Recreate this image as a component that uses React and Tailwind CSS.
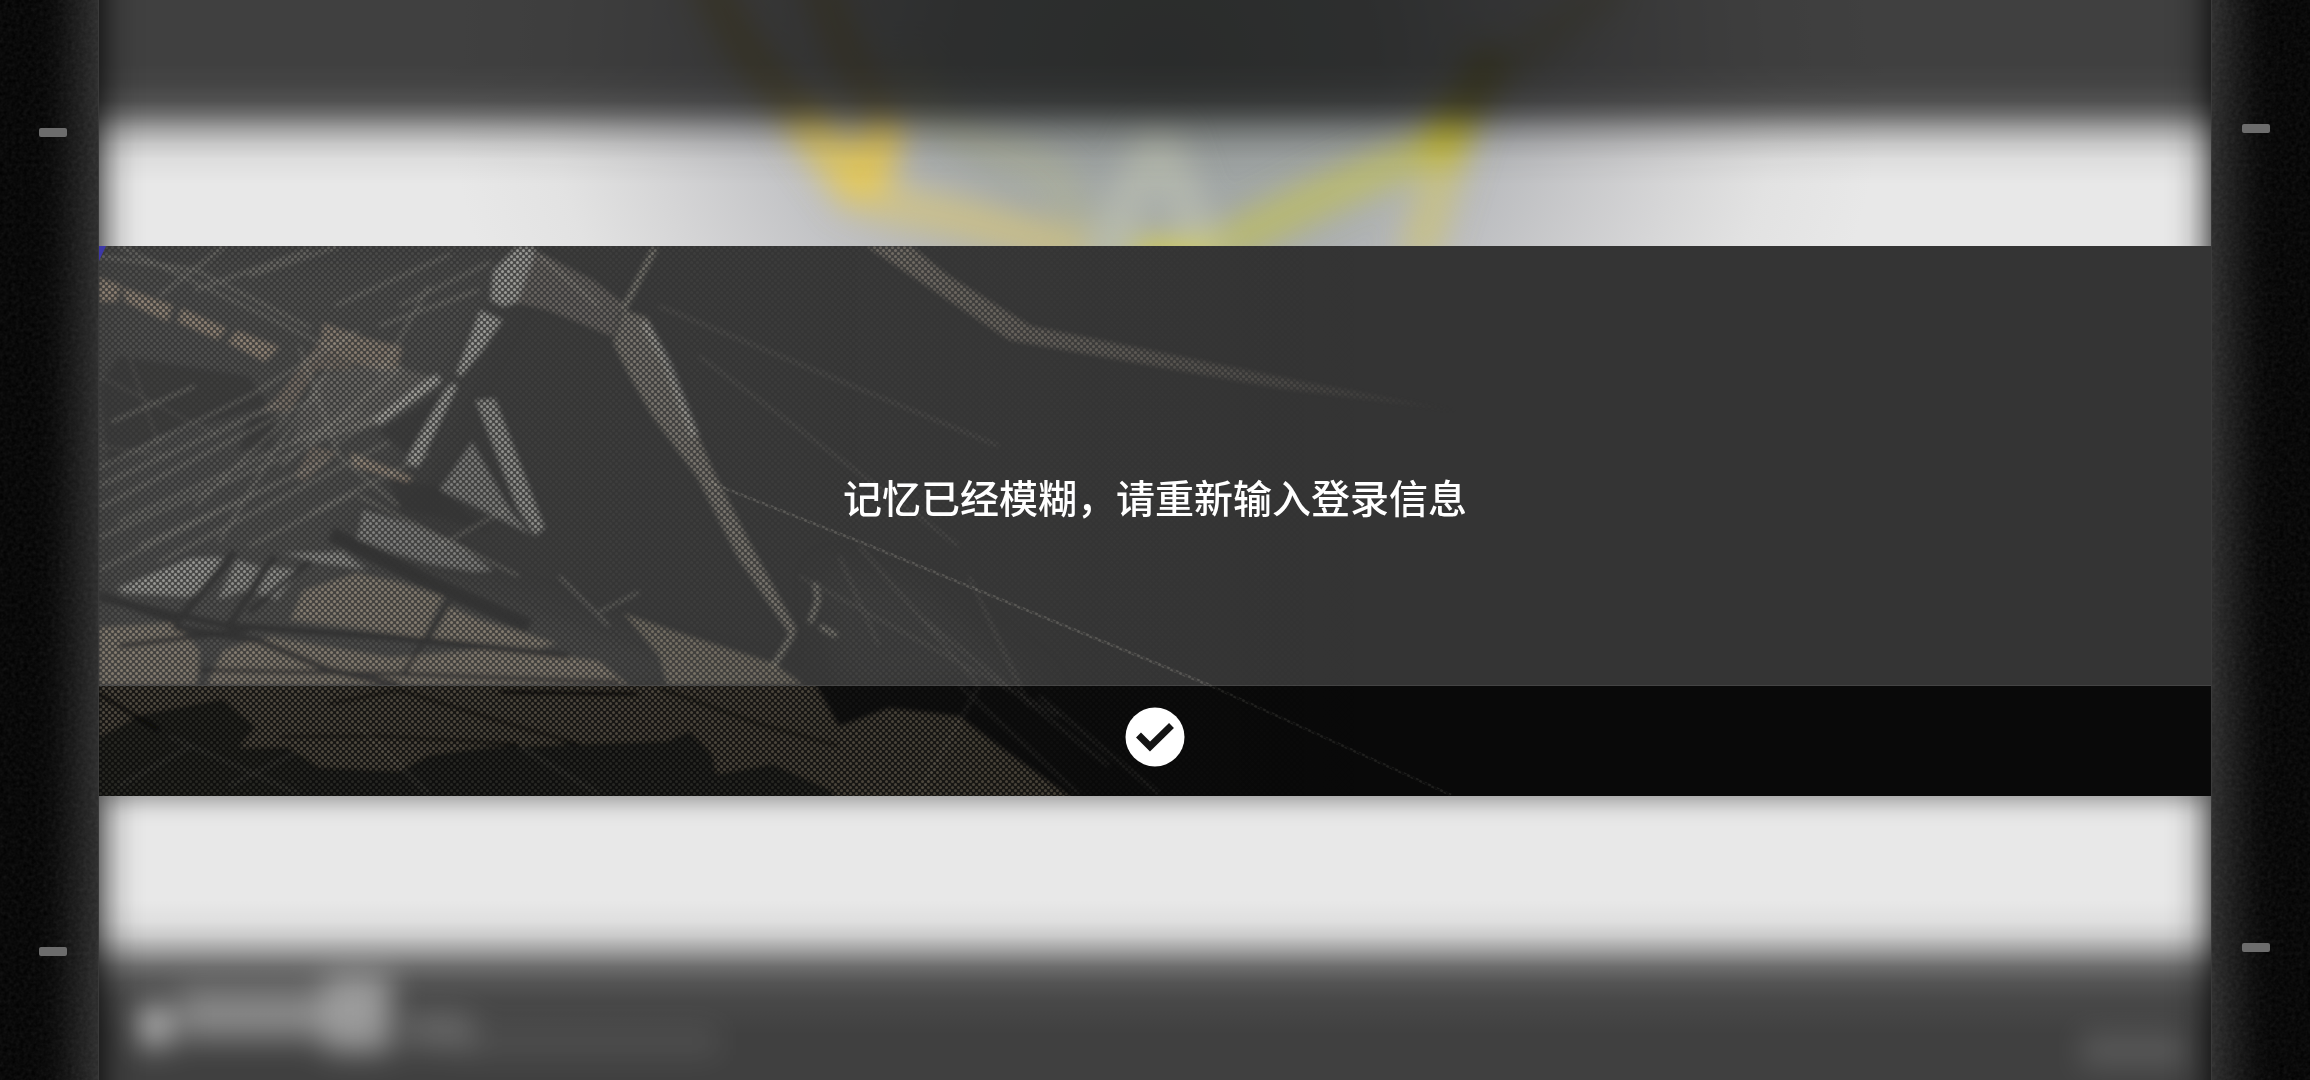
import React, { useState } from 'react';

// Thin scratch lines of the artwork
const scratches = [
  'M0 10 L96 24 L212 82', 'M20 0 L150 62 L228 100', 'M60 50 L126 0', 'M96 44 L210 4', 'M150 30 L240 0',
  'M236 60 L352 8', 'M280 80 L380 44', 'M300 60 L392 16', 'M12 176 L96 140', 'M0 222 L150 150 L260 84',
  'M0 240 L180 158', 'M0 262 L220 150', 'M20 276 L262 166', 'M0 292 L300 160', 'M40 300 L230 214',
  'M0 324 L190 232', 'M60 316 L290 196', 'M150 300 L258 246', 'M120 296 L170 214 L232 120', 'M200 100 L240 210 L300 260',
  'M210 268 L330 208', 'M340 300 L410 262', 'M182 220 L304 120', 'M232 200 L330 142', 'M96 260 L190 170',
  'M440 10 L500 60', 'M460 330 L510 380', 'M500 366 L540 346', 'M260 250 L420 330', 'M330 40 L280 130',
];

const faintScratches = [
  'M560 60 L900 200', 'M600 110 L860 300', 'M760 300 L880 439', 'M700 330 L960 470', 'M820 370 L1010 520',
  'M870 330 L930 460', 'M740 310 L780 400', 'M880 440 L820 548', 'M940 450 L1060 548', 'M860 439 L980 548',
  'M20 540 L92 500', 'M130 540 L200 505', 'M70 490 L200 548', 'M260 480 L330 548', 'M420 500 L500 548',
  'M0 130 L120 190', 'M30 110 L60 200', 'M0 200 L70 210',
];

const darkLines = [
  { d: 'M0 352 L124 379 L300 392 L470 410', w: 7 },
  { d: 'M74 381 L160 395 L230 424 L300 439', w: 7 },
  { d: 'M136 306 L78 376 L0 348', w: 8 },
  { d: 'M176 310 L128 382', w: 7 },
  { d: 'M212 314 L150 366', w: 6 },
  { d: 'M351 355 L304 428', w: 5 },
  { d: 'M232 288 L330 336 L430 380', w: 15 },
  { d: 'M100 424 L300 428 L520 436', w: 5 },
  { d: 'M20 400 L150 384', w: 6 },
];

const darkFooterLines = [
  { d: 'M180 491 L280 490 L420 498', w: 4 },
  { d: 'M230 458 L300 444 L410 478 L480 498', w: 4 },
  { d: 'M0 448 L60 484', w: 6 },
  { d: 'M560 442 L660 478 L740 500', w: 4 },
  { d: 'M400 446 L540 448', w: 6 },
];

const Artwork = () => (
  <svg
    className="pointer-events-none absolute inset-0 h-full w-full"
    viewBox="0 0 2112 550"
    preserveAspectRatio="xMinYMin slice"
    aria-hidden="true"
  >
    <defs>
      <pattern id="dots" width="6" height="6" patternUnits="userSpaceOnUse">
        <rect width="6" height="6" fill="#383838" />
        <circle cx="1.5" cy="1.5" r="1.5" fill="#fff" />
        <circle cx="4.5" cy="4.5" r="1.5" fill="#fff" />
      </pattern>
      <linearGradient id="wash" x1="0" x2="1">
        <stop offset="0" stopColor="#8a8a84" stopOpacity="0.16" />
        <stop offset="0.3" stopColor="#8a8a84" stopOpacity="0.1" />
        <stop offset="0.6" stopColor="#8a8a84" stopOpacity="0" />
      </linearGradient>
      <linearGradient id="beam" gradientUnits="userSpaceOnUse" x1="767" x2="1360" y1="0" y2="0">
        <stop offset="0" stopColor="#9a9184" stopOpacity="0.6" />
        <stop offset="0.4" stopColor="#9a9184" stopOpacity="0.42" />
        <stop offset="1" stopColor="#9a9184" stopOpacity="0.05" />
      </linearGradient>
      <filter id="soften">
        <feGaussianBlur stdDeviation="2" />
      </filter>
      <filter id="mist" x="-10%" y="-10%" width="120%" height="120%">
        <feGaussianBlur stdDeviation="18" />
      </filter>
      <mask id="halftone">
        <rect width="2112" height="550" fill="url(#dots)" />
      </mask>
      <clipPath id="panel">
        <rect width="2112" height="439" />
      </clipPath>
      <clipPath id="base">
        <rect y="440" width="2112" height="110" />
      </clipPath>
    </defs>

    <g mask="url(#halftone)">
      <rect width="2112" height="550" fill="url(#wash)" />

      <g clipPath="url(#panel)">
        <g fill="#8f8f8a" opacity="0.2" filter="url(#mist)">
          <path d="M0 0H430L360 130L310 230L250 300L0 340Z" />
          <path d="M0 300L250 300L560 410L700 439H0Z" />
          <path d="M720 320L820 340L960 450H740Z" opacity="0.5" />
        </g>
        <g filter="url(#soften)">
          <path d="M20 110L150 130L170 160L60 190L10 220L0 140Z M150 170L180 170L170 200L140 205Z M280 185L345 145L310 210Z M290 232L340 240L390 285L300 262Z" fill="#343434" opacity="0.6" />

          {/* warm segments */}
          <g fill="#b09c88" opacity="0.68">
            <path d="M0 31L22 39L18 56L0 56Z" />
            <path d="M24 41L74 59L69 76L26 56Z" />
            <path d="M83 62L128 82L119 94L78 76Z" />
            <path d="M138 84L181 101L166 116L128 97Z" />
            <path d="M224 76L264 91L304 101L298 124L281 124L251 117L221 97Z" opacity="0.85" />
            <path d="M221 94L178 151L164 164L191 166L218 124L258 124Z" opacity="0.6" />
            <path d="M251 206L314 231L309 236L254 221Z" />
            <path d="M212 200L240 206L205 236L196 230Z" opacity="0.6" />
          </g>
          <path d="M281 116L338 132L281 179L190 200L218 130Z" fill="#a09a92" opacity="0.35" />
          <path d="M436 4L494 34L524 57L514 91L481 77L448 64L418 57Z" fill="#9d958c" opacity="0.45" />

          {/* bright steel */}
          <g fill="#b8b8b3" opacity="0.75">
            <path d="M338 127L343 136L281 179L274 174L318 140Z" />
            <path d="M356 136L358 142L319 222L306 216L348 141Z" />
            <path d="M418 1L436 1L434 14L418 57L404 61L391 54L394 24Z" />
            <path d="M381 64L404 74L384 104L362 131L357 127Z" />
            <path d="M376 154L396 152L446 282L436 290L418 262Z" opacity="0.9" />
            <path d="M373 195L410 262L432 289L341 243Z" opacity="0.7" />
            <path d="M264 264L311 277L365 302L395 325L375 326L330 318L290 305L258 292Z" opacity="0.7" />
            <path d="M18 342L91 312L124 311L104 344L88 351L24 347Z" opacity="0.9" />
            <path d="M138 314L161 321L148 344L118 354Z" opacity="0.8" />
            <path d="M171 321L201 324L178 354L158 347Z" opacity="0.8" />
            <path d="M184 307L244 306L268 324L221 317Z" opacity="0.8" />
          </g>
          <path d="M514 97L524 64L548 71L568 117L588 164L614 224L651 297L698 384L691 389L639 312L598 231L554 171L531 131Z" fill="#aca497" opacity="0.55" />
          <path d="M545 76L568 117L596 190" fill="none" stroke="#c4c4bf" strokeWidth="9" opacity="0.45" />
          <path d="M556 2L524 64 M694 387L674 421 M716 337L719 354L711 377 M721 380L738 390" fill="none" stroke="#aaa69a" strokeWidth="6" opacity="0.6" />

          {/* ground */}
          <g fill="#a89c88" opacity="0.6">
            <path d="M204 344L258 327L300 336L344 351L324 391L274 384L191 374Z" />
            <path d="M351 361L381 374L458 397L440 402L381 396L334 391Z" />
            <path d="M0 381L74 377L101 404L98 439H0Z" />
            <path d="M171 391L291 411L411 402L500 415L530 439H108L124 404Z" />
            <path d="M524 367L581 387L674 417L705 439H568L560 410Z" opacity="0.85" />
          </g>
          {darkLines.map((line) => (
            <path key={line.d} d={line.d} fill="none" stroke="#303030" strokeWidth={line.w} opacity="0.85" />
          ))}
          <path d="M767 0L812 0L850 30L932 80L1200 135L1360 165L1180 142L910 94Z" fill="url(#beam)" />
        </g>
      </g>

      {/* lower strip, same ground in shadow */}
      <g clipPath="url(#base)">
        <g filter="url(#soften)">
          <path d="M0 430H712L740 480L790 462L860 470L900 500L985 560H0Z" fill="#968a72" opacity="0.42" />
          <path d="M44 467L124 452L158 481L141 501L190 500L220 520L300 524L330 508L381 501L481 497L568 494L591 484L614 507L618 527L674 517L734 544L740 560H0V490Z" fill="#1e1e1d" opacity="0.8" />
          {darkFooterLines.map((line) => (
            <path key={line.d} d={line.d} fill="none" stroke="#0a0a0a" strokeWidth={line.w} opacity="0.9" />
          ))}
        </g>
      </g>

      <g fill="none" stroke="#a8a69c" strokeWidth="3" filter="url(#soften)">
        <g opacity="0.5">
          {scratches.map((d) => (
            <path key={d} d={d} />
          ))}
        </g>
        <g opacity="0.2">
          {faintScratches.map((d) => (
            <path key={d} d={d} />
          ))}
        </g>
      </g>
      <path d="M610 236L774 301L1110 439" fill="none" stroke="#a8a69c" strokeWidth="3" opacity="0.3" />
      <path d="M1110 439L1352 549" fill="none" stroke="#a8a69c" strokeWidth="3" opacity="0.15" />
    </g>
    <path d="M0 0H7L0 15Z" fill="#3d38a8" />
  </svg>
);

const Backdrop = () => (
  <div className="absolute inset-0 overflow-hidden bg-[#e8e8e8]" aria-hidden="true">
    <svg className="absolute inset-0 h-full w-full" viewBox="0 0 2112 1080" preserveAspectRatio="xMidYMid slice">
      <defs>
        <radialGradient id="halo">
          <stop offset="0" stopColor="#9aa09e" />
          <stop offset="0.3" stopColor="#a1a6a6" stopOpacity="0.95" />
          <stop offset="0.5" stopColor="#a6a8ac" stopOpacity="0.66" />
          <stop offset="0.7" stopColor="#aaaaae" stopOpacity="0.34" />
          <stop offset="0.86" stopColor="#b0b0b0" stopOpacity="0.1" />
          <stop offset="1" stopColor="#b0b0b0" stopOpacity="0" />
        </radialGradient>
        <filter id="haze" x="-20%" y="-20%" width="140%" height="140%">
          <feGaussianBlur stdDeviation="16" />
        </filter>
        <filter id="smudge" x="-20%" y="-60%" width="140%" height="220%">
          <feGaussianBlur stdDeviation="15" />
        </filter>
      </defs>
      <ellipse cx="1066" cy="60" rx="720" ry="640" fill="url(#halo)" />
      <g filter="url(#haze)" fill="none" strokeWidth="36">
        <path d="M604 -30L640 40L700 115" stroke="#b8a03c" opacity="0.45" />
        <path d="M700 110L768 200" stroke="#e2ca60" strokeWidth="44" opacity="0.9" />
        <path d="M715 -30L750 60L785 110" stroke="#b39a3c" opacity="0.4" />
        <path d="M788 115L766 195" stroke="#e6c855" strokeWidth="42" opacity="0.9" />
        <path d="M768 200L860 218L990 252" stroke="#dcc870" opacity="0.65" />
        <path d="M800 60L850 130L950 170L1000 250" stroke="#b4b68a" opacity="0.35" />
        <path d="M1520 -20L1392 80L1352 135" stroke="#a39645" opacity="0.25" />
        <path d="M1392 50L1350 140" stroke="#a39a30" opacity="0.5" />
        <path d="M1350 140L1215 200L1110 252" stroke="#c6c44c" opacity="0.65" />
        <path d="M1356 135L1318 260" stroke="#cfc46a" opacity="0.65" />
        <path d="M1360 110L1335 160" stroke="#c8be32" strokeWidth="42" opacity="0.9" />
        <path d="M1060 130L1000 270M1060 130L1110 270" stroke="#c9cfb8" opacity="0.45" />
        <path d="M1030 256H1110" stroke="#d2cc50" opacity="0.9" />
      </g>
    </svg>
    <div className="absolute inset-x-0 top-0 h-[184px] bg-[linear-gradient(to_bottom,rgba(0,0,0,0.725)_35%,rgba(0,0,0,0.7)_46%,rgba(0,0,0,0.65)_55%,rgba(0,0,0,0.52)_62%,rgba(0,0,0,0.31)_70%,rgba(0,0,0,0.14)_78%,rgba(0,0,0,0.04)_87%,transparent)]" />
    <div className="absolute inset-x-0 bottom-0 h-[180px] bg-[linear-gradient(to_top,rgba(0,0,0,0.725)_25%,rgba(0,0,0,0.69)_44%,rgba(0,0,0,0.64)_54%,rgba(0,0,0,0.53)_63%,rgba(0,0,0,0.31)_72%,rgba(0,0,0,0.13)_80%,rgba(0,0,0,0.04)_88%,transparent)]" />
    <svg className="absolute bottom-0 left-0 h-[150px] w-[700px]" viewBox="0 0 700 150">
      <g filter="url(#smudge)" fill="#fff">
        <rect x="40" y="76" width="32" height="40" opacity="0.62" />
        <rect x="80" y="60" width="150" height="50" opacity="0.36" />
        <rect x="226" y="46" width="66" height="76" opacity="0.46" />
        <rect x="306" y="84" width="66" height="34" opacity="0.2" />
        <rect x="360" y="96" width="260" height="30" opacity="0.08" />
      </g>
    </svg>
    <svg className="absolute right-0 bottom-0 h-[80px] w-[240px]" viewBox="0 0 240 80">
      <rect x="110" y="32" width="108" height="36" fill="#fff" opacity="0.12" filter="url(#smudge)" />
    </svg>
    <div className="absolute inset-y-0 left-0 w-12 bg-[linear-gradient(to_right,rgba(0,0,0,0.5),rgba(0,0,0,0.28)_22%,rgba(0,0,0,0.1)_46%,rgba(0,0,0,0.02)_75%,transparent)]" />
    <div className="absolute inset-y-0 right-0 w-12 bg-[linear-gradient(to_left,rgba(0,0,0,0.5),rgba(0,0,0,0.28)_22%,rgba(0,0,0,0.1)_46%,rgba(0,0,0,0.02)_75%,transparent)]" />
  </div>
);

const Grain = () => (
  <svg className="absolute inset-0 h-full w-full opacity-10" aria-hidden="true">
    <filter id="grain">
      <feTurbulence type="fractalNoise" baseFrequency="0.25" numOctaves="2" />
      <feColorMatrix type="saturate" values="0" />
    </filter>
    <rect width="100%" height="100%" filter="url(#grain)" />
  </svg>
);

const App = () => {
  const [open, setOpen] = useState(true);

  return (
    <div className="flex min-h-screen bg-black font-['Noto_Sans_CJK_SC',sans-serif]">
      {/* Left rail */}
      <aside className="relative flex w-[99px] shrink-0 flex-col justify-between border-r border-[#3a3a3a] bg-linear-to-r from-black from-20% to-[#292929] pt-32 pb-31 pl-[39px]">
        <Grain />
        <span className="relative h-[9px] w-7 rounded-xs bg-[#6c6c6c]" />
        <span className="relative h-[9px] w-7 rounded-xs bg-[#6c6c6c]" />
      </aside>

      <main className="relative flex min-w-0 flex-1 flex-col">
        <Backdrop />
        {open && (
          <section
            role="alertdialog"
            aria-labelledby="dialog-message"
            className="relative mt-[246px] flex flex-col shadow-[0_6px_20px_rgba(0,0,0,0.35)] [clip-path:inset(0_0_-30px_0)]"
          >
            <div className="flex min-h-[439px] items-center justify-center bg-[#343434] px-8 pt-15">
              <p id="dialog-message" className="z-10 text-[39px] leading-[56px] font-medium text-white">
                记忆已经模糊，请重新输入登录信息
              </p>
            </div>
            <div className="flex h-[111px] items-start justify-center border-t border-[#444] bg-[#090909] pt-[21px]">
              <button
                type="button"
                aria-label="确认"
                onClick={() => setOpen(false)}
                className="z-10 h-15 w-15 cursor-pointer rounded-full"
              >
                <svg viewBox="0 0 60 60" className="h-full w-full">
                  <circle cx="30" cy="30" r="29.5" fill="#fff" />
                  <path d="M13.5 28L25 39.5L46.5 18.5" fill="none" stroke="#141414" strokeWidth="7" />
                </svg>
              </button>
            </div>
            <Artwork />
          </section>
        )}
      </main>

      {/* Right rail */}
      <aside className="relative flex w-[99px] shrink-0 flex-col justify-between border-l border-[#3a3a3a] bg-linear-to-l from-black from-20% to-[#292929] pt-31 pb-32 pl-[30px]">
        <Grain />
        <span className="relative h-[9px] w-7 rounded-xs bg-[#6c6c6c]" />
        <span className="relative h-[9px] w-7 rounded-xs bg-[#6c6c6c]" />
      </aside>
    </div>
  );
};

export default App;
